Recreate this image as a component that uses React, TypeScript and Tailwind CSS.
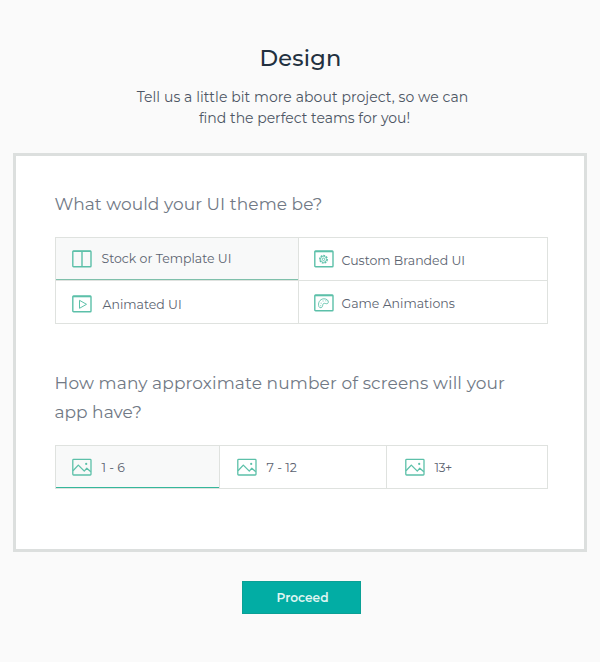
import React, { useState } from "react";

const PanesIcon = () => (
	<svg width="20" height="18" viewBox="0 0 20 18" fill="none" stroke="#5cc0a9" strokeWidth="1.4">
		<rect x="0.8" y="1" width="18.2" height="15.8" rx="0.8" />
		<path d="M0.8 1.4h18.2M10 1v15.8" />
	</svg>
);

const GearIcon = () => (
	<svg width="20" height="18" viewBox="0 0 20 18" fill="none" stroke="#5cc0a9" strokeWidth="1.4">
		<rect x="0.8" y="1" width="18.2" height="15.8" rx="0.8" />
		<path d="M0.8 1.6h18.2" />
		<circle cx="9.5" cy="9.3" r="3.7" strokeWidth="1.5" strokeDasharray="1.8 1" />
		<circle cx="9.5" cy="9.3" r="3" strokeWidth="0.8" />
		<circle cx="9.5" cy="9.3" r="1.2" strokeWidth="0.9" />
	</svg>
);

const PlayIcon = () => (
	<svg width="20" height="18" viewBox="0 0 20 18" fill="none" stroke="#5cc0a9" strokeWidth="1.4">
		<rect x="0.8" y="1" width="18.2" height="15.8" rx="0.8" />
		<path d="M0.8 1.6h18.2" />
		<path d="M7.5 5.3v8l7-4z" strokeWidth="1" strokeLinejoin="round" />
	</svg>
);

const PaletteIcon = () => (
	<svg width="20" height="18" viewBox="0 0 20 18" fill="none" stroke="#5cc0a9" strokeWidth="1.4">
		<rect x="0.8" y="1" width="18.2" height="15.8" rx="0.8" />
		<path d="M0.8 1.6h18.2" />
		<path
			d="M5 12.8C3.600 9.200 5.600 5 9.800 4.800c3-.1 4.800 1.700 4.500 3.600-.3 1.500-1.800 1.500-3 1.100-1.500-.5-2.300 0-2.500 1.300-.2 1.200-.5 2.600-1.700 2.900-1 .2-1.800-.1-2.100-.9z"
			strokeWidth="0.9"
		/>
		<path d="M6.700 9.200h.9M8.600 7h.9M11.400 6.800h.9M6.300 11.700h.9" strokeWidth="0.9" />
	</svg>
);

const PictureIcon = () => (
	<svg width="20" height="18" viewBox="0 0 20 18" fill="none" stroke="#5cc0a9" strokeWidth="1.3">
		<rect x="0.8" y="1.4" width="18.2" height="15.6" rx="0.8" />
		<path d="M1 12.800l5.300-5.700 6 6 2.500-2.900 4 3.600" strokeLinejoin="round" />
		<circle cx="14.200" cy="5.900" r="1.1" fill="#5cc0a9" stroke="none" />
	</svg>
);

const themes = [
	{
		name: "Stock or Template UI",
		icon: <PanesIcon />,
		cell: "pl-4 pb-px",
		label: "ml-[10px] mt-px",
	},
	{
		name: "Custom Branded UI",
		icon: <GearIcon />,
		cell: "pl-[15px] pb-px",
		label: "ml-2 mt-[4px]",
	},
	{
		name: "Animated UI",
		icon: <PlayIcon />,
		cell: "pl-4 pt-[3px]",
		label: "ml-[11px] mt-[2px]",
	},
	{
		name: "Game Animations",
		icon: <PaletteIcon />,
		cell: "pl-[15px] pt-[2px]",
		label: "ml-2 mt-px",
	},
];

const screens = [
	{ name: "1 - 6", cell: "pl-4", label: "ml-[10px] mt-[2px]" },
	{ name: "7 - 12", cell: "pl-[17px]", label: "ml-[10px] mt-[2px]" },
	{ name: "13+", cell: "pl-[18px]", label: "ml-[10px] mt-[2px] tracking-[-0.5px]" },
];

const App = () => {
	const [theme, setTheme] = useState<string>("Stock or Template UI");
	const [screenCount, setScreenCount] = useState<string>("1 - 6");

	return (
		<div className="flex flex-col items-center w-[600px] h-[662px] bg-[#fafafa] font-['Montserrat','Inter',sans-serif]">
			{/*Header*/}
			<h1 className="mt-[42px] pl-px text-[22.5px] leading-8 font-medium text-[#22303f] tracking-[0.2px]">
				Design
			</h1>
			<p className="mt-[13px] pl-[5px] text-center text-[14px] leading-[21px] text-[#4d5664]">
				<span className="tracking-[0.08px]">
					Tell us a little bit more about project, so we can
				</span>
				<br />
				<span className="pl-[4px] tracking-[-0.01px]">find the perfect teams for you!</span>
			</p>
			{/*Questions*/}
			<div className="flex flex-col w-[574px] h-[399px] mt-6 mr-[1px] border-[3px] border-[#dcdfde] bg-white pl-[39px]">
				<h2 className="mt-[34px] text-[17px] leading-7 text-[#717985] tracking-[0.06px] whitespace-nowrap">
					What would your UI theme be?
				</h2>
				<div className="grid grid-cols-[243px_249px] grid-rows-[43px_43px] mt-[19px] w-[493px] border-l border-t border-[#dfe2df]">
					{themes.map((item) => (
						<button
							key={item.name}
							onClick={() => setTheme(item.name)}
							className={`flex items-center border-b border-r border-[#dfe2df] whitespace-nowrap text-[12.5px] leading-5 text-[#5b6370] ${item.cell} ${
								theme === item.name
									? "bg-[#f8f9f9] [box-shadow:inset_0_-1px_0_#7fc0ab]"
									: ""
							}`}
						>
							{item.icon}
							<span className={item.label}>{item.name}</span>
						</button>
					))}
				</div>
				<h2 className="mt-[45px] text-[17px] leading-[29px] text-[#717985] tracking-[0.12px] whitespace-nowrap">
					How many approximate number of screens will your
					<br />
					<span className="tracking-[0.02px]">app have?</span>
				</h2>
				<div className="grid grid-cols-[164px_167px_161px] grid-rows-[43px] mt-[18px] w-[493px] border-l border-t border-[#dfe2df]">
					{screens.map((item) => (
						<button
							key={item.name}
							onClick={() => setScreenCount(item.name)}
							className={`flex items-center border-b border-r border-[#dfe2df] whitespace-nowrap text-[12.5px] leading-5 text-[#5b6370] ${item.cell} ${
								screenCount === item.name
									? "bg-[#f8f9f9] [box-shadow:inset_0_-1px_0_#35b79b]"
									: ""
							}`}
						>
							<PictureIcon />
							<span className={item.label}>{item.name}</span>
						</button>
					))}
				</div>
			</div>
			<button className="mt-[29px] ml-[2px] w-[119px] h-[33px] pl-[3px] border border-[#0aa095] bg-[#02ada4] text-[12.2px] leading-5 font-semibold text-[#e0f6f3]">
				Proceed
			</button>
		</div>
	);
};

export default App;
